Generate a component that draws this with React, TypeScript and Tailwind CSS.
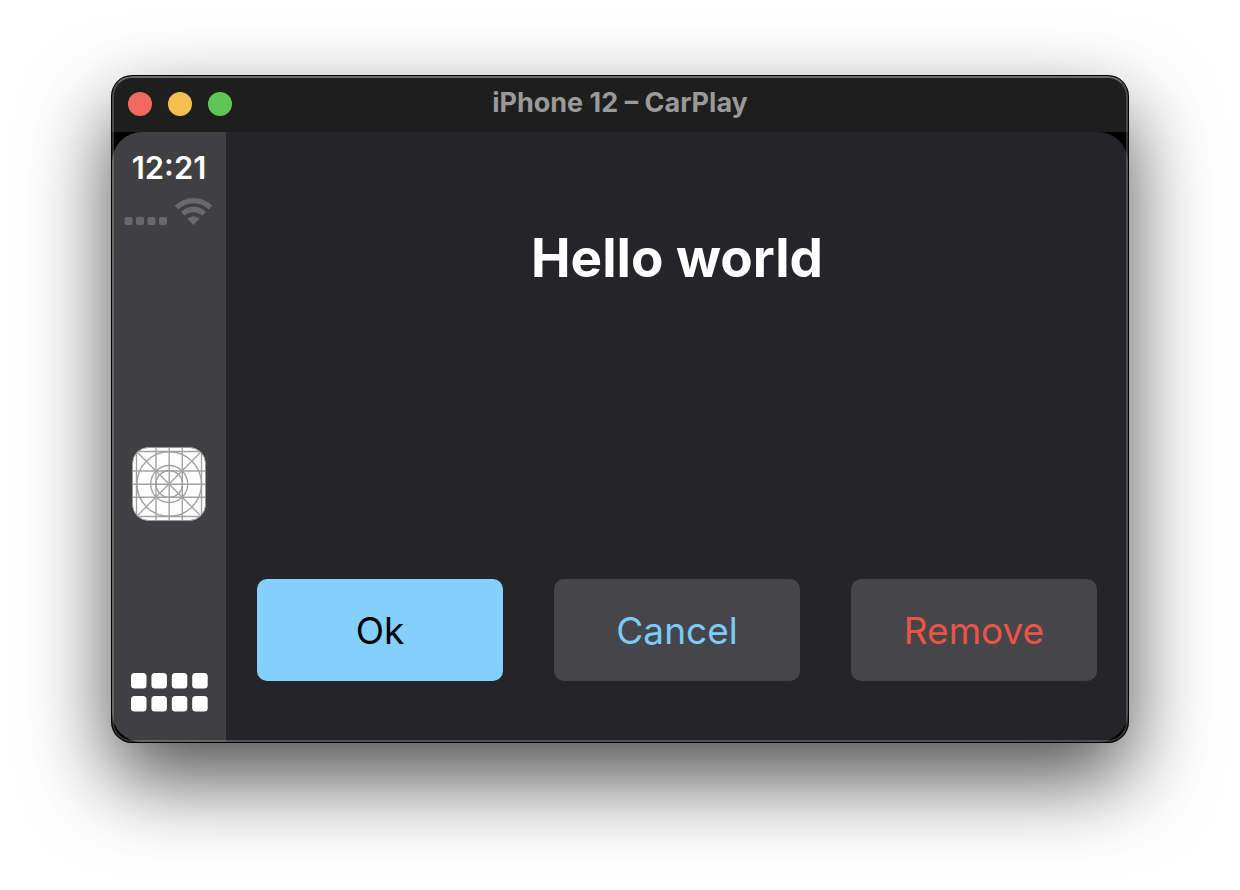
type Action = { label: string; className: string };

const actions: Action[] = [
  { label: "Ok", className: "bg-[#82d0fb] text-black" },
  { label: "Cancel", className: "bg-[#464549] text-[#7bcbf8]" },
  { label: "Remove", className: "bg-[#464549] text-[#eb5545]" },
];

function TitleBar() {
  return (
    <header className="grid h-14 grid-cols-[1fr_auto_1fr] items-center bg-[#1e1e1e] px-4">
      <div className="flex gap-4">
        <button aria-label="Close" className="size-6 rounded-full bg-[#ed6a5f]" />
        <button aria-label="Minimize" className="size-6 rounded-full bg-[#f5bf50]" />
        <button aria-label="Zoom" className="size-6 rounded-full bg-[#61c555]" />
      </div>
      <p className="pb-0.5 text-[27px] leading-8 font-bold text-[#9a9a9a]">iPhone 12 – CarPlay</p>
    </header>
  );
}

function StatusIcons() {
  return (
    <svg viewBox="0 0 90 30" className="mt-3 h-[30px] w-[90px]" fill="#69696b" role="img" aria-label="No signal, Wi-Fi on">
      <rect x="0.500" y="21" width="8" height="8" rx="2" />
      <rect x="12" y="21" width="8" height="8" rx="2" />
      <rect x="23.500" y="21" width="8" height="8" rx="2" />
      <rect x="35" y="21" width="8" height="8" rx="2" />
      <path d="M69.500 29 L63.300 22.800 A8.800 8.800 0 0 1 75.700 22.800 Z" />
      <g fill="none" stroke="#69696b" strokeWidth="5.300">
        <path d="M58.800 17.900 A15.200 15.200 0 0 1 80.200 17.900" />
        <path d="M52.500 11.600 A24.300 24.300 0 0 1 86.500 11.600" />
      </g>
    </svg>
  );
}

function AppIcon() {
  return (
    <svg viewBox="0 0 74 74" className="size-[74px]" aria-hidden="true">
      <defs>
        <clipPath id="app-icon-shape">
          <rect x="0.500" y="0.500" width="73" height="73" rx="16" />
        </clipPath>
      </defs>
      <g clipPath="url(#app-icon-shape)">
        <rect width="74" height="74" fill="#fff" />
        <g fill="none" stroke="#a2a2a2" strokeWidth="1.400">
          <path d="M4.500 0V74M24 0V74M37.200 0V74M50.300 0V74M69.500 0V74" />
          <path d="M0 4.500H74M0 24H74M0 37.200H74M0 50.300H74M0 69.500H74" />
          <path d="M0 0L74 74M74 0L0 74" />
          <circle cx="37.200" cy="37" r="32.300" />
          <circle cx="37.200" cy="37" r="18.500" />
          <circle cx="37.200" cy="37" r="13.300" />
        </g>
      </g>
      <rect x="0.500" y="0.500" width="73" height="73" rx="16" fill="none" stroke="#9a9a9a" />
    </svg>
  );
}

function DashboardIcon() {
  return (
    <svg viewBox="0 0 77 39" className="h-[39px] w-[77px]" fill="#fff" aria-hidden="true">
      {[0, 23].map((y) =>
        [0, 20.4, 40.8, 61.2].map((x) => (
          <rect key={`${x}-${y}`} x={x} y={y} width="15.500" height="15.500" rx="3.500" />
        )),
      )}
    </svg>
  );
}

function Sidebar() {
  return (
    <nav className="flex w-[114px] shrink-0 flex-col items-center bg-[#404042] pt-5 pb-[30px]">
      <time className="text-[31px] leading-8 font-semibold text-white">12:21</time>
      <StatusIcons />
      <div className="flex flex-1 items-end pb-[152px]">
        <button aria-label="Open app">
          <AppIcon />
        </button>
      </div>
      <button aria-label="Dashboard">
        <DashboardIcon />
      </button>
    </nav>
  );
}

export default function App() {
  return (
    <div className="flex min-h-screen bg-white px-28 pt-19 pb-37 font-['Inter','Liberation_Sans',sans-serif]">
      <div className="relative flex flex-1 flex-col overflow-hidden rounded-[20px] bg-black shadow-[0_0_0_1px_#000,0_36px_84px_rgba(0,0,0,0.7)]">
        <TitleBar />
        <div className="flex flex-1 overflow-hidden rounded-[30px]">
          <Sidebar />
          <main className="flex flex-1 flex-col justify-between bg-[#252429] px-[31px] pt-[92px] pb-[61px]">
            <h1 className="text-center text-[53px] leading-[68px] font-bold text-white">Hello world</h1>
            <div className="grid grid-cols-3 gap-[51px]">
              {actions.map((action) => (
                <button
                  key={action.label}
                  className={`h-[102px] rounded-[10px] pt-0.5 text-[37px] leading-[46px] ${action.className}`}
                >
                  {action.label}
                </button>
              ))}
            </div>
          </main>
        </div>
        <div className="pointer-events-none absolute inset-0 rounded-[20px] border-2 border-white/20 border-t-white/35" />
      </div>
    </div>
  );
}
